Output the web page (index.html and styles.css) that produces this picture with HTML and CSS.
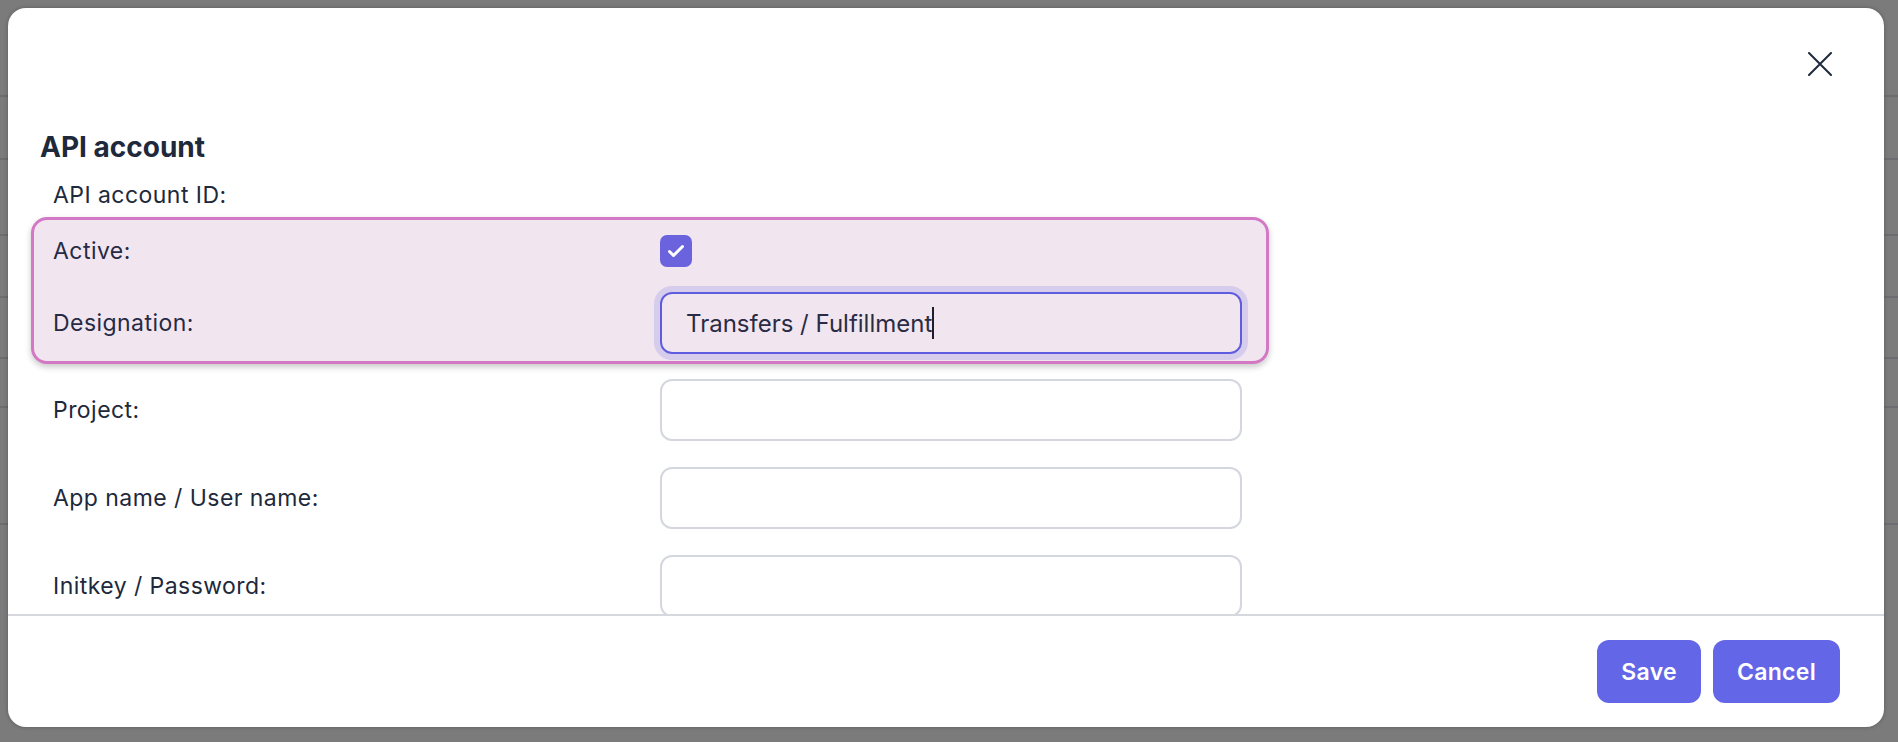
FILE: index.html
```html
<!DOCTYPE html>
<html lang="en">
<head>
<meta charset="utf-8">
<title>API account</title>
<link rel="stylesheet" href="styles.css">
</head>
<body>
<div class="backdrop">
  <div class="modal">
    <div class="modal-header">
      <button class="close" aria-label="Close">
        <svg width="24" height="24" viewBox="0 0 24 24" fill="none" stroke="#1e293b" stroke-width="2" stroke-linecap="round"><path d="M1 1 L23 23 M23 1 L1 23"/></svg>
      </button>
    </div>
    <div class="modal-body">
      <h2 class="title">API account</h2>
      <div class="row row-id"><span class="label">API account ID:</span><span class="value"></span></div>
      <div class="highlight">
        <div class="row row-check">
          <span class="label">Active:</span>
          <span class="checkbox"><svg width="32" height="32" viewBox="0 0 32 32" fill="none" stroke="#fff" stroke-width="3" stroke-linecap="round" stroke-linejoin="round"><path d="M9.5 16.5 L13.5 20.5 L22.5 11.5"/></svg></span>
        </div>
        <div class="row row-field">
          <span class="label">Designation:</span>
          <div class="input focused">Transfers / Fulfillment<span class="caret"></span></div>
        </div>
      </div>
      <div class="fields">
        <div class="row"><span class="label">Project:</span><input class="input" type="text"></div>
        <div class="row"><span class="label">App name / User name:</span><input class="input" type="text"></div>
        <div class="row"><span class="label">Initkey / Password:</span><input class="input" type="password"></div>
      </div>
    </div>
    <div class="modal-footer">
      <button class="btn">Save</button>
      <button class="btn">Cancel</button>
    </div>
  </div>
</div>
</body>
</html>
```
FILE: styles.css
```css
html, body {
  margin: 0;
  height: 100%;
}

body {
  font-family: Inter, "Noto Sans", sans-serif;
  overflow: hidden;
  background-color: #7b7b7b;
  background-image:
    linear-gradient(#6d6d71, #6d6d71),
    linear-gradient(#6d6d71, #6d6d71),
    linear-gradient(#6d6d71, #6d6d71),
    linear-gradient(#6d6d71, #6d6d71),
    linear-gradient(#6d6d71, #6d6d71),
    linear-gradient(#6d6d71, #6d6d71),
    linear-gradient(#6d6d71, #6d6d71);
  background-repeat: no-repeat;
  background-size: 100% 2px;
  background-position: 0 95px, 0 158px, 0 234px, 0 296px, 0 357px, 0 406px, 0 523px;
}

.backdrop {
  height: 742px;
  box-sizing: border-box;
  padding: 8px 14px 15px 8px;
  display: flex;
}

.modal {
  flex: 1;
  background: #fff;
  border-radius: 18px;
  display: flex;
  flex-direction: column;
  overflow: hidden;
  box-shadow: 0 0 4px rgba(0, 0, 0, 0.25);
}

.modal-header {
  height: 114px;
  flex: none;
  box-sizing: border-box;
  display: flex;
  justify-content: flex-end;
  align-items: flex-start;
  padding: 36px 44px 0 0;
}

.close {
  width: 40px;
  height: 40px;
  border: 0;
  padding: 0;
  background: none;
  display: flex;
  align-items: center;
  justify-content: center;
}

.modal-body {
  flex: 1;
  min-height: 0;
  overflow: hidden;
  padding: 8px 0 0 32px;
}

.title {
  margin: 0 0 9px;
  font-size: 28px;
  line-height: 34px;
  font-weight: 700;
  color: #1e293b;
}

.row {
  display: grid;
  grid-template-columns: 607px 582px;
  align-items: center;
  padding-left: 13px;
}

.row-id {
  height: 44px;
}

.label {
  font-size: 23px;
  letter-spacing: 0.45px;
  color: #1e293b;
}

.highlight {
  width: 1238px;
  box-sizing: border-box;
  margin-left: -9px;
  border: 3px solid #d378c5;
  border-radius: 16px;
  background: #f1e6f0;
  padding: 0 0 7px 0;
  box-shadow: 0 3px 6px rgba(0, 0, 0, 0.22);
}

.highlight .row {
  padding-left: 19px;
}

.highlight .label {
  color: #272a44;
}

.row-check {
  height: 62px;
}

.row-field {
  margin-top: 10px;
}

.checkbox {
  width: 32px;
  height: 32px;
  border-radius: 7px;
  background: #6b63dd;
  display: flex;
}

.fields {
  display: flex;
  flex-direction: column;
  gap: 26px;
  margin-top: 15px;
}

.input {
  width: 582px;
  height: 62px;
  box-sizing: border-box;
  border: 2px solid #d4d7dd;
  border-radius: 12px;
  background: #fff;
  font-family: inherit;
  font-size: 24px;
  padding: 0 24px;
  margin: 0;
  outline: none;
}

.input.focused {
  border-color: #5f5ce0;
  box-shadow: 0 0 0 6px #d6cdec;
  background: transparent;
  display: flex;
  align-items: center;
  color: #2a2b45;
}

.caret {
  display: inline-block;
  width: 2px;
  height: 32px;
  margin-left: 0;
  background: #1e1e2e;
}

.modal-footer {
  flex: none;
  height: 113px;
  box-sizing: border-box;
  border-top: 2px solid #d5d9de;
  display: flex;
  justify-content: flex-end;
  align-items: center;
  gap: 12px;
  padding-right: 44px;
}

.btn {
  height: 63px;
  padding: 0 24px;
  border: 0;
  border-radius: 12px;
  background: #6366e6;
  color: #fff;
  font-family: inherit;
  font-size: 23px;
  font-weight: 600;
  letter-spacing: 0.3px;
}
```
